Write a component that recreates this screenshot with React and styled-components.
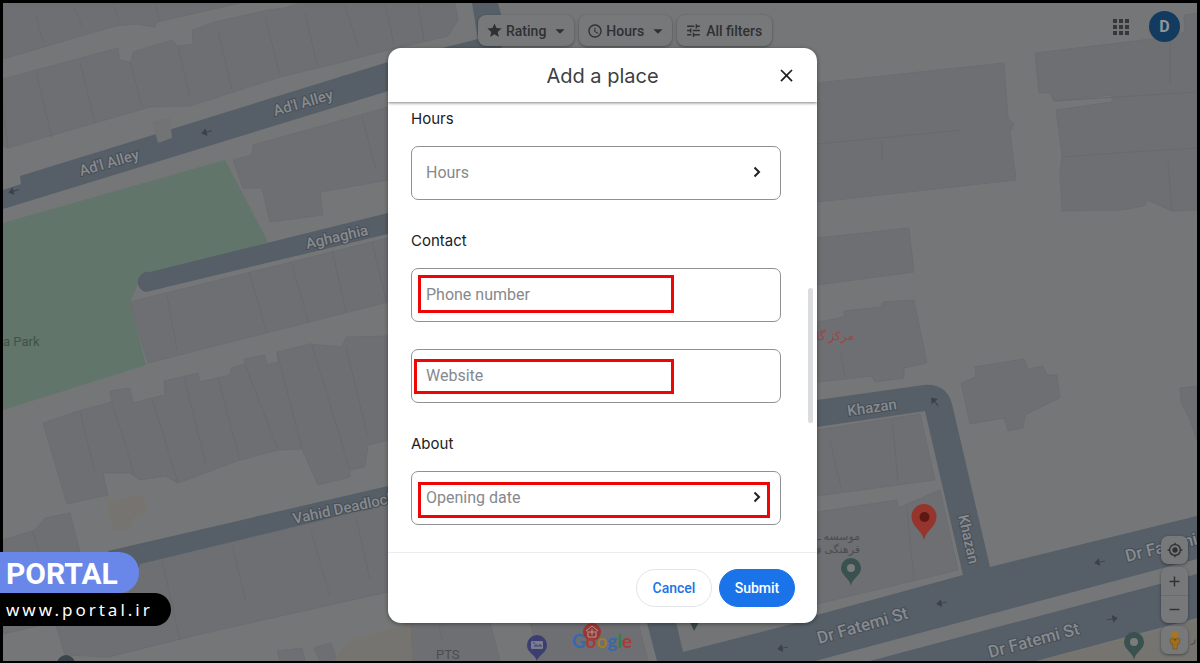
import React from 'react';
import styled, { createGlobalStyle } from 'styled-components';
import {
    MdStar,
    MdArrowDropDown,
    MdSchedule,
    MdTune,
    MdApps,
    MdMyLocation,
    MdAdd,
    MdRemove,
    MdClose,
} from 'react-icons/md';

const GlobalStyle = createGlobalStyle`
    * {
        box-sizing: border-box;
    }
    body {
        margin: 0;
        font-family: Roboto, "Liberation Sans", sans-serif;
    }
    button, input {
        font-family: inherit;
        margin: 0;
        padding: 0;
    }
`
const Page = styled.div`
    min-height: 100vh;
    display: flex;
    flex-direction: column;
    position: relative;
    background-color: #757677;
    border: 3px solid #000;
    border-bottom-width: 2px;
`
const MapSvg = styled.svg`
    position: absolute;
    inset: 0;
    width: 100%;
    height: 100%;
`
const RoadName = styled.text`
    font-size: ${(props) => props.$size || 15}px;
    font-weight: 500;
    fill: #878b8f;
    stroke: #474e56;
    stroke-width: 2px;
    paint-order: stroke;
`
const PlaceName = styled.text`
    font-family: Roboto, "DejaVu Sans", sans-serif;
    font-size: ${(props) => props.$size || 13}px;
    fill: ${(props) => props.$color || '#4a4d50'};
`
const TopBar = styled.header`
    display: flex;
    align-items: flex-start;
    justify-content: space-between;
    position: relative;
    padding: 8px 17px 0 475px;
`
const Filters = styled.nav`
    display: flex;
    gap: 5px;
    padding-top: 4px;
`
const FilterButton = styled.button`
    height: 31px;
    padding: 0 ${(props) => (props.$menu ? 3 : 10)}px 0 8px;
    display: flex;
    align-items: center;
    gap: ${(props) => (props.$menu ? 3 : 4)}px;
    border: none;
    border-radius: 8px;
    background-color: #777879;
    color: #2f3032;
    font-size: 14px;
    font-weight: 500;
    white-space: nowrap;
    box-shadow: 0 1px 3px rgba(0, 0, 0, 0.35);
    cursor: pointer;
`
const Account = styled.div`
    display: flex;
    align-items: center;
    gap: 16px;
`
const AppsButton = styled.button`
    width: 24px;
    height: 24px;
    display: flex;
    border: none;
    background: transparent;
    color: #353739;
    cursor: pointer;
`
const Avatar = styled.button`
    width: 31px;
    height: 31px;
    border: none;
    border-radius: 50%;
    background-color: #133b60;
    color: #929597;
    font-size: 16px;
    font-weight: 700;
    cursor: pointer;
`
const MapControls = styled.div`
    display: flex;
    flex-direction: column;
    gap: 3px;
    position: relative;
    margin: auto 9px 7px auto;
`
const ControlGroup = styled.div`
    display: flex;
    flex-direction: column;
    border-radius: 7px;
    background-color: #777879;
    box-shadow: 0 1px 3px rgba(0, 0, 0, 0.4);
`
const ControlButton = styled.button`
    width: 27px;
    height: 28px;
    display: flex;
    align-items: center;
    justify-content: center;
    border: none;
    background: transparent;
    color: #2e3032;
    cursor: pointer;

    & + & {
        border-top: 1px solid #6b6c6d;
    }
`
const DialogLayer = styled.div`
    position: absolute;
    inset: 0;
    display: flex;
    align-items: flex-start;
    justify-content: center;
    padding: 45px 0 0 5px;
`
const Dialog = styled.div`
    width: 429px;
    max-width: 100%;
    display: flex;
    flex-direction: column;
    border-radius: 13px;
    background-color: #fff;
    overflow: hidden;
    box-shadow: 0 1px 4px rgba(0, 0, 0, 0.4);
`
const DialogHeader = styled.div`
    height: 54px;
    display: grid;
    grid-template-columns: 40px 1fr 40px;
    align-items: center;
    position: relative;
    padding: 0 11px;
    box-shadow: 0 1px 3px rgba(0, 0, 0, 0.5);
`
const Title = styled.h1`
    grid-column: 2;
    margin: 0;
    padding-top: 2px;
    color: #3c4043;
    font-family: Inter, Roboto, sans-serif;
    font-size: 20px;
    font-weight: 400;
    text-align: center;
`
const CloseButton = styled.button`
    height: 40px;
    display: flex;
    align-items: center;
    justify-content: center;
    border: none;
    background: transparent;
    color: #202124;
    cursor: pointer;
`
const DialogBody = styled.form`
    display: flex;
    flex-direction: column;
    gap: 31px;
    position: relative;
    padding: 7px 36px 27px 23px;
`
const ScrollThumb = styled.div`
    position: absolute;
    top: 186px;
    right: 4px;
    width: 5px;
    height: 135px;
    border-radius: 3px;
    background-color: #dadce0;
`
const Section = styled.section`
    display: flex;
    flex-direction: column;
`
const SectionTitle = styled.h2`
    margin: 0 0 17px;
    color: #202124;
    font-family: Inter, Roboto, sans-serif;
    font-size: 15px;
    font-weight: 400;
    line-height: 20px;
`
const Fields = styled.div`
    display: flex;
    flex-direction: column;
    gap: 27px;
`
const Field = styled.div`
    display: flex;
    position: relative;
    height: 54px;
    border: 1px solid #8f9295;
    border-radius: 7px;
`
const FieldInput = styled.input`
    flex: 1;
    min-width: 0;
    padding: 0 14px 2px;
    border: none;
    outline: none;
    background: transparent;
    color: #202124;
    font-size: 16px;

    &::placeholder {
        color: #85898d;
        opacity: 1;
    }
`
const FieldButton = styled.button`
    flex: 1;
    display: flex;
    align-items: center;
    justify-content: space-between;
    padding: 0 18px 2px 14px;
    border: none;
    background: transparent;
    color: #85898d;
    font-size: 16px;
    cursor: pointer;
`
const Highlight = styled.div`
    position: absolute;
    top: ${(props) => props.$top}px;
    left: ${(props) => props.$left}px;
    width: ${(props) => props.$width}px;
    height: ${(props) => props.$height}px;
    border: 3px solid #ee0606;
    pointer-events: none;
`
const DialogFooter = styled.div`
    display: flex;
    justify-content: flex-end;
    gap: 7px;
    padding: 16px 22px;
    border-top: 1px solid #eceded;
`
const FooterButton = styled.button`
    width: 76px;
    height: 38px;
    border: 1px solid ${(props) => (props.$primary ? '#1a73e8' : '#e3e5e8')};
    border-radius: 19px;
    background-color: ${(props) => (props.$primary ? '#1a73e8' : '#fff')};
    color: ${(props) => (props.$primary ? '#fff' : '#1a73e8')};
    font-size: 14px;
    font-weight: 500;
    cursor: pointer;
`
const Brand = styled.div`
    position: absolute;
    left: -3px;
    bottom: 35px;
    display: flex;
    flex-direction: column;
    align-items: flex-start;
`
const BrandName = styled.div`
    padding: 3px 21px 0 6px;
    border-radius: 0 20px 20px 0;
    background-color: #6887e8;
    color: #fff;
    font-size: 30px;
    font-weight: 700;
    line-height: 38px;
`
const BrandLink = styled.a`
    padding: 0 18px 0 6px;
    border-radius: 0 17px 17px 0;
    background-color: #000;
    color: #fff;
    font-family: "Noto Sans", sans-serif;
    font-size: 17px;
    line-height: 33px;
    letter-spacing: 3px;
    text-decoration: none;
`

const buildings = [
    '3,3 240,3 157,22 155,27 136,24 115,26 3,59',
    '3,79 118,48 120,60 131,62 133,52 173,40 177,46 193,44 192,30 215,22 268,10 285,8 300,3 455,3 458,20 448,36 388,50 330,65 280,77 190,106 150,107 8,148 3,146',
    '253,145 325,125 388,107 388,180 320,192 323,215 270,222 262,188 243,188 233,160 252,155',
    '130,302 388,238 388,302 148,363',
    '43,423 78,411 112,402 110,391 130,388 133,403 152,398 165,395 164,381 198,373 200,382 230,375 231,368 245,364 244,359 265,355 267,365 278,362 277,352 310,344 342,347 346,337 388,336 388,440 368,445 365,467 350,470 350,477 318,485 302,449 278,450 240,460 178,483 165,476 140,480 130,473 103,473 108,495 67,504',
    '3,540 35,530 45,518 70,513 80,552 3,560',
    '130,566 388,505 388,592 205,633 108,657 65,655 55,622 3,634 3,600 130,600',
    '405,622 490,622 500,661 410,661',
    '530,622 638,622 648,661 540,661',
    '277,651 302,648 305,661 280,661',
    '314,648 331,643 337,661 320,661',
    '817,83 1004,63 1008,118 1014,124 1010,132 1016,180 817,202',
    '1035,53 1160,38 1185,32 1184,15 1197,13 1197,210 1172,211 1147,200 1144,206 1122,210 1062,211 1060,175 1062,155 1056,110 1112,102 1112,95 1054,101 1050,93 1039,93',
    '817,238 909,228 914,272 817,285',
    '817,322 844,317 844,311 881,307 883,302 914,300 927,363 904,368 904,378 875,382 872,376 817,382',
    '961,383 976,377 975,367 1024,359 1028,369 1043,366 1047,375 1057,375 1060,398 1051,402 1025,415 1023,428 1008,431 1004,418 970,424',
    '817,430 920,414 935,480 817,496',
    '817,512 897,500 898,508 940,490 958,570 817,604',
    '1180,388 1197,386 1197,440 1190,420 1181,402',
]

const lots = [
    'M36,15 L43,42', 'M75,8 L83,30', 'M113,3 L119,22', 'M155,3 L160,20',
    'M36,72 L52,138', 'M80,62 L95,123', 'M130,62 L142,106', 'M178,46 L190,98',
    'M218,30 L232,90', 'M265,17 L280,75', 'M305,13 L317,65', 'M345,5 L359,50', 'M385,3 L394,45',
    'M418,3 L424,40', 'M3,107 L8,148', 'M362,116 L376,170',
    'M167,295 L177,350', 'M249,272 L267,333', 'M291,262 L309,323', 'M332,250 L346,312', 'M372,242 L386,300',
    'M80,412 L95,473', 'M112,402 L134,473', 'M152,398 L178,483', 'M184,377 L206,465', 'M218,378 L240,460',
    'M245,364 L278,450', 'M277,352 L302,449', 'M312,345 L350,470', 'M346,347 L368,438',
    'M33,532 L40,556', 'M162,560 L180,640', 'M232,545 L246,602', 'M310,527 L330,597', 'M356,517 L370,580',
    'M817,144 L962,130', 'M882,140 L882,160', 'M1062,157 L1130,152 L1197,148', 'M1054,101 L1197,92', 'M1168,160 L1172,211',
    'M1170,42 L1170,85', 'M830,440 L841,488', 'M892,420 L898,480', 'M907,509 L914,580', 'M840,350 L845,378', 'M439,625 L442,640',
]

// one way markers along the roads
const arrows = [
    [207, 132, -14], [14, 191, -14], [1100, 562, -10], [942, 603, -10],
    [783, 648, -10], [1112, 619, 170], [935, 402, 50],
]

const MapView = () => (
    <MapSvg viewBox="3 3 1194 658" preserveAspectRatio="xMidYMid slice" aria-hidden="true">
        <polygon points="3,223 225,160 268,242 140,280 130,302 146,365 3,410" fill="#61756a" />
        <g fill="#6e6f72" stroke="#6c6d70" strokeWidth="1">
            {buildings.map((points) => <polygon key={points} points={points} />)}
        </g>
        <path d={lots.join(' ')} fill="none" stroke="#696a6d" strokeWidth="1" />
        <g fill="#757471" stroke="#7b7567">
            <polygon points="108,503 142,495 147,512 132,518 130,529 114,530" />
            <polygon points="347,642 410,625 412,661 335,661" />
            <polygon points="1040,661 1197,622 1197,661" />
        </g>

        <g fill="#565e67">
            <polygon points="3,190 21,184 20,176 153,135 172,129 388,62 478,39 472,3 498,3 506,34 500,52 388,91 3,209" />
            <path d="M150,272 L400,210 L400,231 L146,292 A10,10 0 0 1 150,272 Z" />
            <polygon points="108,551 388,486 388,504 140,564 132,585" />
            <path fillRule="evenodd" d="M817,400 L924,385 Q946,383 952,404 L990,567 L1197,516 L1197,559 L815,661 L657,661 L645,615 L817,615 L963,575 L925,411 L817,427 Z" />
            <polygon points="870,661 1197,574 1197,618 1036,661" />
        </g>
        <polygon points="676,622 800,622 683,652" fill="#737475" />
        <polygon points="152,122 170,118 172,138 158,143" fill="#727375" />
        <g stroke="#3d4248" strokeWidth="1" fill="#3d4248">
            {arrows.map(([x, y, angle]) => (
                <path
                    key={`${x}-${y}`}
                    d="M5,0 L-4,0 M-5,0 L-1,-3 L-1,3 Z"
                    transform={`translate(${x} ${y}) rotate(${angle})`}
                />
            ))}
        </g>

        <RoadName transform="translate(81 176) rotate(-16)">Ad'l Alley</RoadName>
        <RoadName transform="translate(275 116) rotate(-16)">Ad'l Alley</RoadName>
        <RoadName transform="translate(307 249) rotate(-13)">Aghaghia</RoadName>
        <RoadName transform="translate(294 524) rotate(-12)">Vahid Deadlock</RoadName>
        <RoadName transform="translate(848 416) rotate(-8)">Khazan</RoadName>
        <RoadName transform="translate(958 516) rotate(77)">Khazan</RoadName>
        <RoadName $size={17} transform="translate(819 644) rotate(-16)">Dr Fatemi St</RoadName>
        <RoadName $size={17} transform="translate(990 658) rotate(-15)">Dr Fatemi St</RoadName>
        <RoadName $size={17} transform="translate(1127 562) rotate(-14)">Dr Fatemi</RoadName>

        <PlaceName x="3" y="346" $color="#3f5347">a Park</PlaceName>
        <PlaceName x="436" y="659">PTS</PlaceName>
        <PlaceName x="854" y="340" textAnchor="end" $size={12} $color="#a04444">مرکز گا</PlaceName>
        <PlaceName x="860" y="540" textAnchor="end" $size={11}>موسسه ـ</PlaceName>
        <PlaceName x="860" y="553" textAnchor="end" $size={11}>فرهنگی ف</PlaceName>
        <PlaceName x="1196" y="642" textAnchor="end" $size={11}>ر</PlaceName>

        <g>
            <path d="M924,540 C922,530 911.500,527 911.500,516.500 A12.500,12.500 0 0 1 936.500,516.500 C936.500,527 926,530 924,540 Z" fill="#96352e" />
            <circle cx="924.500" cy="517" r="5" fill="#5e1712" />
            {[[851, 568], [1134, 642]].map(([x, y]) => (
                <g key={x} transform={`translate(${x} ${y})`}>
                    <path d="M0,18 C-1,10 -10,8 -10,0 A10,10 0 0 1 10,0 C10,8 1,10 0,18 Z" fill="#39514f" />
                    <circle r="4" fill="#7a7c7b" />
                </g>
            ))}
            <path d="M537,661 C535,654 527,653 527,645 A10,10 0 0 1 547,645 C547,653 539,654 537,661 Z" fill="#3c3e72" />
            <rect x="531" y="641" width="12" height="8" rx="1" fill="#7c7d8c" />
            <path d="M533,643 h2 M535,647 v-2 h2 v2 M539,647 v-2 h2 v2" stroke="#3c3e72" fill="none" />
            <path d="M690,622 h9 l-5,9 Z" fill="#39463f" />
            <circle cx="66" cy="664" r="9" fill="#3b454c" />
            <circle cx="592" cy="632" r="9" fill="#9b3733" />
            <path d="M586,631 L592,626 L598,631 M588,631 V637 H596 V631 M592,629 V635 M589,632 H595" stroke="#aaa09e" fill="none" />
        </g>

        <text x="602" y="648" textAnchor="middle" fontFamily="Lato, sans-serif" fontSize="19" fontWeight="700">
            <tspan fill="#3968ac">G</tspan>
            <tspan fill="#a83b3a">o</tspan>
            <tspan fill="#9b7d2b">o</tspan>
            <tspan fill="#3968ac">g</tspan>
            <tspan fill="#347f4a">l</tspan>
            <tspan fill="#a83b3a">e</tspan>
        </text>
    </MapSvg>
)

const Pegman = () => (
    <svg width="12" height="20" viewBox="0 0 12 20" aria-hidden="true">
        <path d="M3,8 Q1,8 1,11 L2,14 L3.500,14 L4,19 H8 L8.500,14 L10,14 L11,11 Q11,8 9,8 Z" fill="#a06f1c" stroke="#674a1b" strokeWidth="0.500" />
        <circle cx="6" cy="4.500" r="3.500" fill="#a87620" />
        <path d="M4,9 L6,11 L8,9 Z" fill="#704b14" />
    </svg>
)

const Chevron = () => (
    <svg width="10" height="12" viewBox="0 0 10 12" aria-hidden="true">
        <path d="M2.500,1.500 L7,6 L2.500,10.500" fill="none" stroke="#202124" strokeWidth="2" />
    </svg>
)

const App = () => {
    return (
        <Page>
            <GlobalStyle />
            <MapView />
            <TopBar>
                <Filters aria-label="Filters">
                    <FilterButton $menu>
                        <MdStar size={17} />Rating<MdArrowDropDown size={22} />
                    </FilterButton>
                    <FilterButton $menu>
                        <MdSchedule size={16} />Hours<MdArrowDropDown size={22} />
                    </FilterButton>
                    <FilterButton>
                        <MdTune size={17} />All filters
                    </FilterButton>
                </Filters>
                <Account>
                    <AppsButton aria-label="Apps"><MdApps size={24} /></AppsButton>
                    <Avatar aria-label="Account">D</Avatar>
                </Account>
            </TopBar>
            <MapControls>
                <ControlGroup>
                    <ControlButton aria-label="Your location"><MdMyLocation size={16} /></ControlButton>
                </ControlGroup>
                <ControlGroup>
                    <ControlButton aria-label="Zoom in"><MdAdd size={17} /></ControlButton>
                    <ControlButton aria-label="Zoom out"><MdRemove size={17} /></ControlButton>
                </ControlGroup>
                <ControlGroup>
                    <ControlButton aria-label="Street View"><Pegman /></ControlButton>
                </ControlGroup>
            </MapControls>

            <DialogLayer>
                <Dialog role="dialog" aria-labelledby="dialog-title">
                    <DialogHeader>
                        <Title id="dialog-title">Add a place</Title>
                        <CloseButton aria-label="Close"><MdClose size={21} /></CloseButton>
                    </DialogHeader>
                    <DialogBody id="place-form" onSubmit={(e) => e.preventDefault()}>
                        <Section>
                            <SectionTitle>Hours</SectionTitle>
                            <Field>
                                <FieldButton type="button">Hours<Chevron /></FieldButton>
                            </Field>
                        </Section>
                        <Section>
                            <SectionTitle>Contact</SectionTitle>
                            <Fields>
                                <Field>
                                    <FieldInput type="tel" placeholder="Phone number" aria-label="Phone number" />
                                    <Highlight $top={6} $left={6} $width={256} $height={38} />
                                </Field>
                                <Field>
                                    <FieldInput type="url" placeholder="Website" aria-label="Website" />
                                    <Highlight $top={9} $left={2} $width={260} $height={35} />
                                </Field>
                            </Fields>
                        </Section>
                        <Section>
                            <SectionTitle>About</SectionTitle>
                            <Field>
                                <FieldButton type="button">Opening date<Chevron /></FieldButton>
                                <Highlight $top={10} $left={6} $width={352} $height={36} />
                            </Field>
                        </Section>
                        <ScrollThumb />
                    </DialogBody>
                    <DialogFooter>
                        <FooterButton type="button">Cancel</FooterButton>
                        <FooterButton type="submit" form="place-form" $primary>Submit</FooterButton>
                    </DialogFooter>
                </Dialog>
            </DialogLayer>

            <Brand>
                <BrandName>PORTAL</BrandName>
                <BrandLink href="#portal">www.portal.ir</BrandLink>
            </Brand>
        </Page>
    );
};

export default App;
